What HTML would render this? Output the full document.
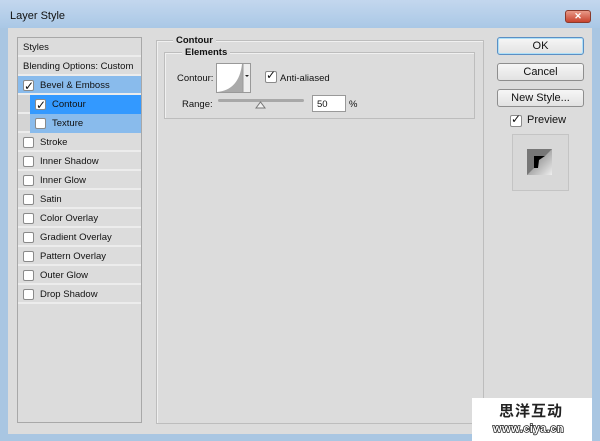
<!DOCTYPE html>
<html><head><style>
*{margin:0;padding:0;box-sizing:border-box}
body{width:600px;height:441px;overflow:hidden;background:#a9c6e2;font-family:"Liberation Sans",sans-serif;font-size:9.5px;color:#111;position:relative}
.a{position:absolute}
.title{left:0;top:0;width:600px;height:28px;background:linear-gradient(#c3d7ee,#aac8e6)}
.content{left:8px;top:28px;width:584px;height:406px;background:#dcdcdc}
.list{left:17px;top:37px;width:125px;height:386px;border:1px solid #a8a8a8;background:#dcdcdc}
.row{position:absolute;left:0;width:123px;height:19px;border-bottom:2px solid #ececec;line-height:19px}
.cb{position:absolute;width:11px;height:11px;background:#fff;border:1px solid #8a8a8a;border-radius:2px}
.btn{position:absolute;left:497px;width:87px;height:18px;border:1px solid #8e8e8e;border-radius:3px;background:linear-gradient(#f6f6f6,#e2e2e2);text-align:center;font-size:11px;line-height:16px}
.ck:after{content:"✓";position:absolute;left:0;top:-4px;font-size:12px;font-weight:bold;color:#111;font-family:"DejaVu Sans",sans-serif}
</style></head><body>
<div class="a title"></div>
<div class="a" style="left:10px;top:10px;font-size:11px;color:#111">Layer Style</div>
<div class="a" style="left:565px;top:10px;width:26px;height:13px;background:linear-gradient(#e89a88,#c8432e);border:1px solid #8a3a2c;border-radius:3px;color:#fff;font-size:9px;text-align:center;line-height:11px;font-weight:bold">✕</div>
<div class="a content"></div>
<div class="a list">
 <div class="row" style="top:0;padding-left:5px">Styles</div>
 <div class="row" style="top:19px;padding-left:5px">Blending Options: Custom</div>
 <div class="row" style="top:38px;background:#89bbec;padding-left:22px"><span class="cb ck" style="left:5px;top:4px"></span>Bevel &amp; Emboss</div>
 <div class="row" style="top:57px;background:#d4d4d4;border-bottom-color:#ececec"><div style="position:absolute;left:12px;top:0;width:111px;height:19px;background:#3399ff;padding-left:22px">Contour</div><span class="cb ck" style="left:17px;top:4px"></span></div>
 <div class="row" style="top:76px;background:#d4d4d4"><div style="position:absolute;left:12px;top:0;width:111px;height:19px;background:#89bbec;padding-left:22px">Texture</div><span class="cb" style="left:17px;top:4px"></span></div>
 <div class="row" style="top:95px;padding-left:22px"><span class="cb" style="left:5px;top:4px"></span>Stroke</div>
 <div class="row" style="top:114px;padding-left:22px"><span class="cb" style="left:5px;top:4px"></span>Inner Shadow</div>
 <div class="row" style="top:133px;padding-left:22px"><span class="cb" style="left:5px;top:4px"></span>Inner Glow</div>
 <div class="row" style="top:152px;padding-left:22px"><span class="cb" style="left:5px;top:4px"></span>Satin</div>
 <div class="row" style="top:171px;padding-left:22px"><span class="cb" style="left:5px;top:4px"></span>Color Overlay</div>
 <div class="row" style="top:190px;padding-left:22px"><span class="cb" style="left:5px;top:4px"></span>Gradient Overlay</div>
 <div class="row" style="top:209px;padding-left:22px"><span class="cb" style="left:5px;top:4px"></span>Pattern Overlay</div>
 <div class="row" style="top:228px;padding-left:22px"><span class="cb" style="left:5px;top:4px"></span>Outer Glow</div>
 <div class="row" style="top:247px;padding-left:22px"><span class="cb" style="left:5px;top:4px"></span>Drop Shadow</div>
</div>
<div class="a" style="left:156px;top:40px;width:328px;height:384px;border:1px solid #bdbdbd;box-shadow:inset 1px 1px 0 #f0f0f0"></div>
<div class="a" style="left:173px;top:35px;background:#dcdcdc;padding:0 3px;font-weight:bold">Contour</div>
<div class="a" style="left:164px;top:52px;width:311px;height:67px;border:1px solid #bdbdbd;box-shadow:inset 1px 1px 0 #f0f0f0"></div>
<div class="a" style="left:182px;top:47px;background:#dcdcdc;padding:0 3px;font-weight:bold">Elements</div>
<div class="a" style="left:177px;top:73px">Contour:</div>
<div class="a" style="left:216px;top:63px;width:35px;height:30px;border:1px solid #999;background:#fff">
 <svg width="33" height="28" style="position:absolute;left:0;top:0"><path d="M0 28 Q22 26 25 0 L26 0 L26 28Z" fill="#aaa"/><rect x="26" y="0" width="7" height="28" fill="#eee"/><line x1="26" y1="0" x2="26" y2="28" stroke="#999"/><path d="M28 11 L32 11 L30 13Z" fill="#222"/></svg>
</div>
<span class="a cb ck" style="left:265px;top:71px;width:12px;height:12px"></span>
<div class="a" style="left:280px;top:73px">Anti-aliased</div>
<div class="a" style="left:182px;top:99px">Range:</div>
<div class="a" style="left:218px;top:99px;width:86px;height:3px;background:#a8a8a8;border-radius:2px"></div>
<svg class="a" style="left:255px;top:101px" width="11" height="8"><path d="M1 7 L5.5 1 L10 7Z" fill="#f0f0f0" stroke="#777"/></svg>
<div class="a" style="left:312px;top:95px;width:34px;height:17px;border:1px solid #999;background:#fff;padding:3px 0 0 4px">50</div>
<div class="a" style="left:349px;top:99px">%</div>
<div class="btn" style="top:37px;border-color:#5b8fc4;box-shadow:inset 0 0 0 1px #aee0f8">OK</div>
<div class="btn" style="top:63px">Cancel</div>
<div class="btn" style="top:89px">New Style...</div>
<span class="a cb ck" style="left:510px;top:115px;width:12px;height:12px"></span>
<div class="a" style="left:527px;top:114px;font-size:11px">Preview</div>
<div class="a" style="left:512px;top:134px;width:57px;height:57px;border:1px solid #c4c4c4;background:#d8d8d8"></div>
<svg class="a" style="left:527px;top:149px" width="25" height="26"><defs><linearGradient id="g" x1="0" y1="0" x2="1" y2="1"><stop offset="0" stop-color="#666"/><stop offset="1" stop-color="#eee"/></linearGradient></defs><rect width="25" height="26" fill="url(#g)"/><path d="M0 0 L25 0 L18 7 L7 7 L7 19 L0 26Z" fill="#777"/><path d="M7 7 L18 7 L12 11 L11 19 L7 19Z" fill="#000"/></svg>
<div class="a" style="left:472px;top:398px;width:120px;height:43px;background:#fff"></div>
<div class="a" style="left:499px;top:402px;font-family:'Noto Sans CJK SC',sans-serif;font-size:15px;font-weight:bold;line-height:18px;letter-spacing:1px;color:#222">思洋互动</div>
<div class="a" style="left:493px;top:423px;font-family:'Liberation Sans',sans-serif;font-size:11px;font-weight:bold;color:#fff;letter-spacing:0.5px;-webkit-text-stroke:1.5px #222;paint-order:stroke fill">www.ciya.cn</div>
</body></html>
